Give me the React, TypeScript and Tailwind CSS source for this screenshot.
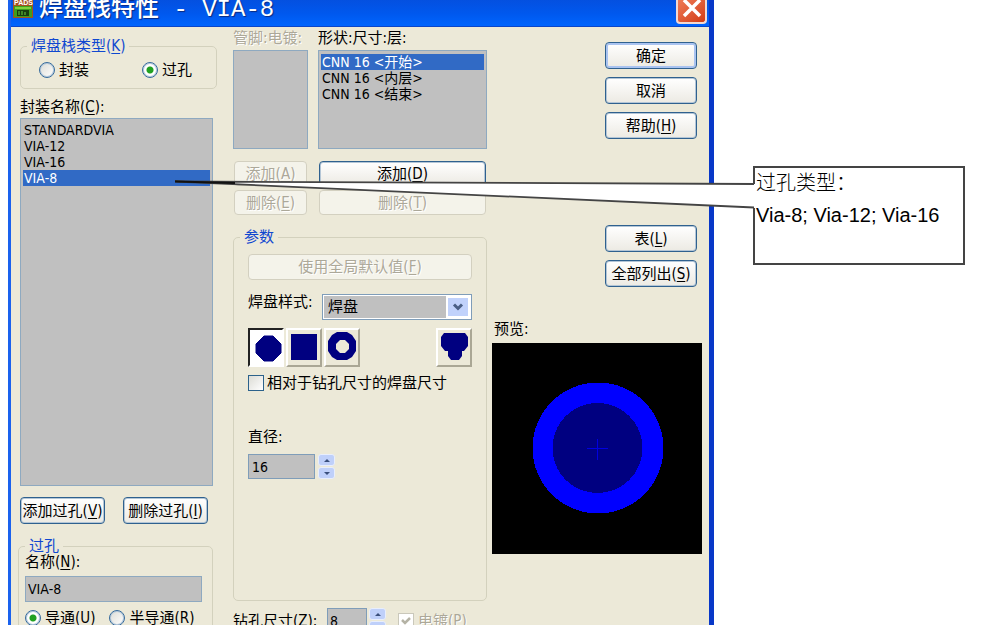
import { useState } from 'react';
import type { ReactNode } from 'react';
import clsx from 'clsx';

const packages = ['STANDARDVIA', 'VIA-12', 'VIA-16', 'VIA-8'];
const layers = ['CNN 16 <开始>', 'CNN 16 <内层>', 'CNN 16 <结束>'];

// Accelerator key, e.g. (K)
function Key({ k }: { k: string }) {
  return (
    <>
      (<u className="underline-offset-2">{k}</u>)
    </>
  );
}

function XpButton({
  children,
  className,
  disabled,
  primary,
}: {
  children: ReactNode;
  className?: string;
  disabled?: boolean;
  primary?: boolean;
}) {
  return (
    <button
      type="button"
      disabled={disabled}
      className={clsx(
        'flex items-center justify-center rounded-[4px] border whitespace-nowrap',
        disabled
          ? 'border-[#d3d0c0] bg-[#f4f3ea] text-[#aca899] [text-shadow:1px_1px_0_#fff]'
          : 'border-[#2f618f] bg-linear-to-b from-white to-[#eceae3] text-black',
        !disabled && (primary ? 'shadow-[inset_0_0_0_2px_#a9c3f0]' : 'shadow-[inset_0_0_0_1px_#b4c6d6]'),
        className
      )}
    >
      <span>{children}</span>
    </button>
  );
}

function Group({ title, className, children }: { title: ReactNode; className?: string; children: ReactNode }) {
  return (
    <fieldset className={clsx('rounded-[5px] border border-[#d3d1bd]', className)}>
      <legend className="ml-1.5 h-4 px-1 text-[#1048d0]">{title}</legend>
      {children}
    </fieldset>
  );
}

function ListBox({
  label,
  items,
  initial,
  className,
}: {
  label: string;
  items: string[];
  initial?: string;
  className?: string;
}) {
  const [selected, setSelected] = useState(initial);

  return (
    <ul role="listbox" aria-label={label} className={clsx('border border-[#8ea9c0] bg-[#c0c0c0] px-0.5 pt-[3px] text-sm/4', className)}>
      {items.map((item) => (
        <li
          key={item}
          role="option"
          aria-selected={item === selected}
          onClick={() => setSelected(item)}
          className={clsx('cursor-default px-px', item === selected && 'bg-[#316ac5] text-white')}
        >
          {item}
        </li>
      ))}
    </ul>
  );
}

function Radio({ name, checked, children }: { name: string; checked?: boolean; children: ReactNode }) {
  return (
    <label className="flex h-4 items-center gap-1 whitespace-nowrap">
      <input
        type="radio"
        name={name}
        defaultChecked={checked}
        className="size-4 shrink-0 appearance-none rounded-full border border-[#356a9c] bg-linear-to-br from-[#dcdcd6] to-white shadow-[inset_0_0_0_1px_#b7cadb] checked:bg-[radial-gradient(circle,#21a121_0_3px,#fff_4px)]"
      />
      <span>{children}</span>
    </label>
  );
}

function Spinner({ label }: { label: string }) {
  return (
    <div className="flex w-[17px] flex-col gap-px">
      {['M1 4l3-3 3 3z', 'M1 1l3 3 3-3z'].map((d, i) => (
        <button
          key={d}
          type="button"
          aria-label={`${label} ${i === 0 ? '+' : '-'}`}
          className="flex h-3 items-center justify-center rounded-[3px] border border-[#e8eefc] bg-[#bfd0fa]"
        >
          <svg viewBox="0 0 8 5" className="h-[5px] w-2">
            <path d={d} fill="#3a4f7c" />
          </svg>
        </button>
      ))}
    </div>
  );
}

function ShapeButton({
  label,
  pressed,
  className,
  children,
}: {
  label: string;
  pressed?: boolean;
  className?: string;
  children: ReactNode;
}) {
  return (
    <button
      type="button"
      aria-label={label}
      aria-pressed={pressed}
      className={clsx(
        'h-[39px] w-9 border-2',
        pressed
          ? 'border-t-[#222] border-r-white border-b-white border-l-[#222] bg-white'
          : 'border-t-white border-r-[#aaa795] border-b-[#aaa795] border-l-white bg-[#ece9d8]',
        className
      )}
    >
      <svg viewBox="0 0 32 35" className="h-[35px] w-8" fill="#000080">
        {children}
      </svg>
    </button>
  );
}

function TitleBar() {
  return (
    <header className="flex h-[27px] items-start bg-linear-to-b from-[#0450e0] via-[#0058ee] to-[#0066ff] pr-0.5 pl-0.5 shadow-[inset_0_-1px_0_#0b46c8]">
      <svg viewBox="0 0 20 18" className="h-[18px] w-5 shrink-0">
        <rect width="20" height="18" fill="#a8501c" />
        <text x="1" y="5" fontSize="7" fontWeight="700" fontFamily="Liberation Sans, sans-serif" fill="#fff">
          PADS
        </text>
        <rect x="1" y="6" width="18" height="11" fill="#3f9e1c" />
        <rect x="2" y="7" width="16" height="2" fill="#7fd13a" />
        <rect x="4" y="10" width="12" height="6" fill="#173d10" />
        <path d="M6 11v4M9 11v4M12 12v3" stroke="#6ad040" />
      </svg>
      <h1 className="ml-1.5 font-['Liberation_Mono','Noto_Sans_CJK_SC',monospace] text-2xl/5 font-medium whitespace-pre text-white [text-shadow:1px_1px_1px_#0a2a80]">
        焊盘栈特性 - VIA-8
      </h1>
      <button
        type="button"
        aria-label="关闭"
        className="ml-auto flex h-6 w-[31px] items-start justify-center rounded-b-[4px] border-2 border-t-0 border-[#f3d9d2] bg-linear-to-br from-[#ee7a55] to-[#d23a10]"
      >
        <svg viewBox="0 0 20 20" className="size-5">
          <path d="M2 0l16 16M18 0L2 16" stroke="#fff" strokeWidth="3.5" />
        </svg>
      </button>
    </header>
  );
}

function PackageColumn() {
  return (
    <div className="pt-[11px]">
      <Group title={<>焊盘栈类型<Key k="K" /></>} className="pb-0.5">
        <div className="flex h-8 items-center gap-[53px] pl-[18px]">
          <Radio name="stack">封装</Radio>
          <Radio name="stack" checked>过孔</Radio>
        </div>
      </Group>

      <p className="mt-[10px] h-4">封装名称<Key k="C" />:</p>
      <ListBox label="封装名称" items={packages} initial="VIA-8" className="mt-[3px] mr-1 h-[368px]" />

      <div className="mt-[11px] flex gap-[18px]">
        <XpButton className="h-[27px] w-[85px]">添加过孔<Key k="V" /></XpButton>
        <XpButton className="h-[27px] w-[85px]">删除过孔<Key k="I" /></XpButton>
      </div>

      <Group title="过孔" className="mt-[14px] mr-1 -ml-0.5">
        <div className="px-1.5 pb-8">
          <label htmlFor="via-name" className="block h-4">名称<Key k="N" />:</label>
          <input
            id="via-name"
            defaultValue="VIA-8"
            className="mt-1.5 block h-[26px] w-[177px] border border-[#8ea9c0] bg-[#c0c0c0] px-0.5 text-sm"
          />
          <div className="mt-2 flex gap-3.5">
            <Radio name="through" checked>导通<Key k="U" /></Radio>
            <Radio name="through">半导通<Key k="R" /></Radio>
          </div>
        </div>
      </Group>
    </div>
  );
}

function ParameterColumn() {
  return (
    <div className="pt-[3px]">
      <div className="grid grid-cols-[75px_1fr] gap-x-[10px]">
        <p className="h-4 whitespace-nowrap text-[#aca899] [text-shadow:1px_1px_0_#fff]">管脚:电镀:</p>
        <p className="h-4">形状:尺寸:层:</p>
        <ListBox label="管脚" items={[]} className="mt-1 h-[99px]" />
        <ListBox label="形状" items={layers} initial={layers[0]} className="mt-1 h-[99px]" />
        <XpButton disabled className="mx-px mt-3 h-[25px]">添加<Key k="A" /></XpButton>
        <XpButton className="mx-px mt-3 h-[25px]">添加<Key k="D" /></XpButton>
        <XpButton disabled className="mx-px mt-1 h-[25px]">删除<Key k="E" /></XpButton>
        <XpButton disabled className="mx-px mt-1 h-[25px]">删除<Key k="T" /></XpButton>
      </div>

      <Group title="参数" className="mt-[14px]">
        <div className="px-[14px] pb-[121px]">
          <XpButton disabled className="mt-[9px] h-[26px] w-full">使用全局默认值<Key k="F" /></XpButton>

          <div className="mt-[14px] flex items-start justify-between">
            <label htmlFor="pad-style" className="h-4">焊盘样式:</label>
            <div className="relative h-[26px] w-[150px] border border-[#7f9db9] bg-white p-px">
              <select id="pad-style" className="block size-full appearance-none bg-[#c0c0c0] px-1">
                <option>焊盘</option>
              </select>
              <span className="pointer-events-none absolute inset-y-px right-px flex w-6 items-center justify-center border-2 border-white bg-[#c1d2fb]">
                <svg viewBox="0 0 12 8" className="h-2 w-3">
                  <path d="M2 1.5l4 4 4-4" fill="none" stroke="#4a5f85" strokeWidth="3" />
                </svg>
              </span>
            </div>
          </div>

          <div className="mt-2 flex gap-0.5">
            <ShapeButton label="圆形" pressed>
              <path d="M14 6h9l8 8v9l-8 8h-9l-8-8v-9z" stroke="#000080" strokeLinejoin="round" />
            </ShapeButton>
            <ShapeButton label="方形">
              <path d="M3 4h26v26H3z" />
            </ShapeButton>
            <ShapeButton label="环形">
              <path
                fillRule="evenodd"
                d="M11 2h10l5 3 4 6v10l-4 6-5 3H11l-5-3-4-6V11l4-6zM14 10l-4 4v5l4 4h5l4-4v-5l-4-4z"
              />
            </ShapeButton>
            <ShapeButton label="异形" className="ml-auto">
              <path d="M6 3h21l3 4v9l-4 5h-2v5l-3 4h-8l-3-4v-5H7l-4-5V7z" />
            </ShapeButton>
          </div>

          <label className="mt-2 flex h-4 items-center gap-[3px] whitespace-nowrap">
            <input
              type="checkbox"
              className="size-4 appearance-none border border-[#2c628b] bg-linear-to-br from-[#dcdcd6] to-white"
            />
            相对于钻孔尺寸的焊盘尺寸
          </label>

          <label htmlFor="diameter" className="mt-[38px] block h-4">直径:</label>
          <div className="mt-[9px] flex gap-[3px]">
            <input
              id="diameter"
              defaultValue="16"
              className="h-[25px] w-[67px] border border-[#7f9db9] bg-[#c0c0c0] px-[3px] text-sm"
            />
            <Spinner label="直径" />
          </div>
        </div>
      </Group>

      <div className="mt-[7px] flex items-center">
        <label htmlFor="drill" className="w-[94px] whitespace-nowrap">钻孔尺寸<Key k="Z" />:</label>
        <input
          id="drill"
          defaultValue="8"
          className="mr-0.5 h-[25px] w-10 border border-[#7f9db9] bg-[#c0c0c0] px-0.5 text-sm"
        />
        <Spinner label="钻孔尺寸" />
        <label className="ml-3 flex items-center gap-1 whitespace-nowrap text-[#aca899] [text-shadow:1px_1px_0_#fff]">
          <span className="relative flex size-4">
            <input type="checkbox" defaultChecked disabled className="size-4 appearance-none border border-[#cac8bb] bg-white" />
            <svg viewBox="0 0 16 16" className="absolute inset-0 size-4">
              <path d="M4 7l3 3 5-5" fill="none" stroke="#b5b3a5" strokeWidth="2.5" />
            </svg>
          </span>
          <span>电镀<Key k="P" /></span>
        </label>
      </div>
    </div>
  );
}

function ActionColumn() {
  return (
    <div className="pt-[15px]">
      <div className="mr-[5px] ml-auto flex w-[92px] flex-col gap-2">
        <XpButton primary className="h-[27px]">确定</XpButton>
        <XpButton className="h-[27px]">取消</XpButton>
        <XpButton className="h-[27px]">帮助<Key k="H" /></XpButton>
      </div>
      <div className="mt-[86px] mr-[5px] ml-auto flex w-[92px] flex-col gap-2">
        <XpButton className="h-[27px]">表<Key k="L" /></XpButton>
        <XpButton className="h-[27px]">全部列出<Key k="S" /></XpButton>
      </div>

      <p className="mt-[34px] h-4 px-0.5">预览:</p>
      <svg viewBox="0 0 210 211" className="mt-1.5 block w-full bg-black" shapeRendering="crispEdges">
        <circle cx="106" cy="105" r="65.5" fill="#0000ff" />
        <circle cx="105.5" cy="105" r="45" fill="#000080" />
        <path d="M95 105.5h21M105.5 96v21" stroke="#0000e0" />
      </svg>
    </div>
  );
}

function Callout() {
  return (
    <aside className="relative mt-[166px] mr-[35px] ml-[39px] h-[99px] flex-1 border-2 border-[#444] bg-white font-['Liberation_Sans','Noto_Sans_CJK_SC',sans-serif] text-xl/8 whitespace-nowrap text-black">
      {/* Pointer to the selected via */}
      <svg viewBox="0 0 580 30" className="pointer-events-none absolute top-3 right-full h-[30px] w-[580px]">
        <path d="M0 1.5L580 4V28z" fill="#fff" />
        <path d="M0 1.5L579 4M0 1.5L579 27.5" fill="none" stroke="#444" strokeWidth="1.8" />
        <path d="M0 1.5L60 3" stroke="#111" strokeWidth="2" />
      </svg>
      <div className="-mt-px px-px">
        <p className="font-light">过孔类型：</p>
        <p>Via-8; Via-12; Via-16</p>
      </div>
    </aside>
  );
}

export default function App() {
  return (
    <main className="flex h-screen items-start overflow-hidden bg-white pl-2 font-['DejaVu_Sans_Condensed','Noto_Sans_CJK_SC',sans-serif] text-[15px]/4 text-black">
      <section className="min-h-screen w-[706px] shrink-0 border-r-5 border-l-3 border-r-[#0838c8] border-l-[#1a62ee] bg-[#ece9d8]">
        <TitleBar />
        <div className="grid grid-cols-[197px_1fr_210px] pr-[7px] pl-[9px]">
          <PackageColumn />
          <div className="mr-[5px] ml-4">
            <ParameterColumn />
          </div>
          <ActionColumn />
        </div>
      </section>
      <Callout />
    </main>
  );
}
